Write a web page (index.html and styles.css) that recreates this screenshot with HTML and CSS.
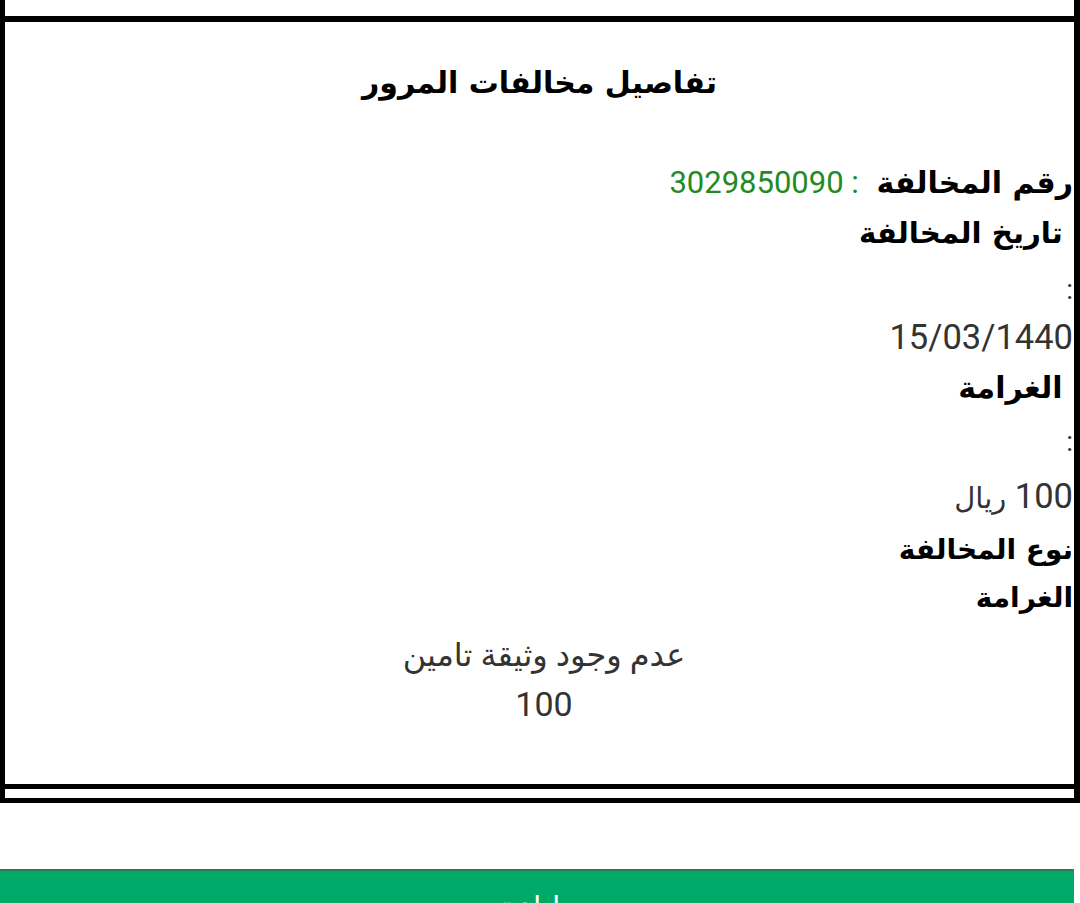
FILE: index.html
```html
<!DOCTYPE html>
<html lang="ar" dir="rtl">
<head>
<meta charset="utf-8">
<title>تفاصيل مخالفات المرور</title>
<link rel="stylesheet" href="styles.css">
</head>
<body>
<div class="frame">
  <div class="prev-cell"></div>
  <div class="card">
    <h1 class="title">تفاصيل مخالفات المرور</h1>
    <div class="details">
      <div class="line row1"><b class="label">رقم المخالفة</b><span class="num"> : 3029850090</span></div>
      <div class="line row2"><b class="label mid">&nbsp;تاريخ المخالفة</b></div>
      <div class="line colon c1">:</div>
      <div class="line value v1">15/03/1440</div>
      <div class="line row3"><b class="label">&nbsp;الغرامة</b></div>
      <div class="line colon c2">:</div>
      <div class="line value v2">100 <span class="unit">ريال</span></div>
      <div class="line row4"><b class="label small">نوع المخالفة</b></div>
      <div class="line row5"><b class="label small">الغرامة</b></div>
      <div class="line center t1">عدم وجود وثيقة تامين</div>
      <div class="line center t2">100</div>
    </div>
  </div>
  <div class="gap"></div>
  <div class="bottom-rule"></div>
</div>
<div class="spacer"></div>
<button class="btn">طباعة</button>
</body>
</html>
```

FILE: styles.css
```css
html, body {
  margin: 0;
  padding: 0;
  background: #ffffff;
}
body {
  width: 1080px;
  height: 903px;
  overflow: hidden;
  font-family: "DejaVu Sans", sans-serif;
  direction: rtl;
}
.frame {
  border-left: 5px solid #000;
  border-right: 6px solid #000;
  box-sizing: border-box;
  width: 1080px;
}
.prev-cell {
  height: 16px;
}
.card {
  border-top: 6px solid #000;
  border-bottom: 5px solid #000;
  height: 773px;
  box-sizing: border-box;
}
.title {
  margin: 0;
  padding-top: 36px;
  height: 50px;
  line-height: 50px;
  text-align: center;
  font-size: 30px;
  font-weight: bold;
  color: #000;
}
.details {
  padding-right: 1px;
  padding-top: 50px;
}
.line {
  line-height: 50px;
  height: 50px;
  text-align: right;
}
.c1 { margin-top: 7px; }
.v1 { margin-top: -3px; }
.row3 { margin-top: 1px; }
.c2 { margin-top: 4px; }
.v2 { margin-top: 4px; }
.row4 { margin-top: 4px; }
.row5 { margin-top: -2px; }
.t1 { margin-top: 7px; }
.t2 { margin-top: -1px; }
.label {
  font-size: 30px;
  font-weight: bold;
  color: #000;
}
.label.mid {
  font-size: 29.3px;
}
.label.small {
  font-size: 28px;
}
.num {
  font-family: Roboto, sans-serif;
  font-size: 31px;
  color: #1f8b24;
  padding-right: 10px;
}
.colon {
  font-family: Roboto, sans-serif;
  font-size: 28px;
  color: #333;
}
.value {
  font-family: Roboto, "DejaVu Sans", sans-serif;
  font-size: 34.5px;
  color: #333;
}
.unit {
  font-family: "DejaVu Sans", sans-serif;
  font-size: 29px;
}
.center {
  text-align: center;
  padding-left: 10px;
  font-family: Roboto, "DejaVu Sans", sans-serif;
  font-size: 32px;
  color: #333;
}
.t2 {
  font-size: 34px;
}
.gap {
  height: 9px;
}
.bottom-rule {
  height: 5px;
  background: #000;
}
.spacer {
  height: 66px;
}
.btn {
  display: block;
  width: 1074px;
  height: 60px;
  margin-left: 0;
  margin-right: auto;
  border: none;
  border-top: 2px solid #2a7a58;
  background: #00a968;
  color: #fff;
  font-family: "DejaVu Sans", sans-serif;
  font-size: 30px;
  padding: 15px 0 0;
  line-height: 40px;
  text-align: center;
  vertical-align: top;
}
```
